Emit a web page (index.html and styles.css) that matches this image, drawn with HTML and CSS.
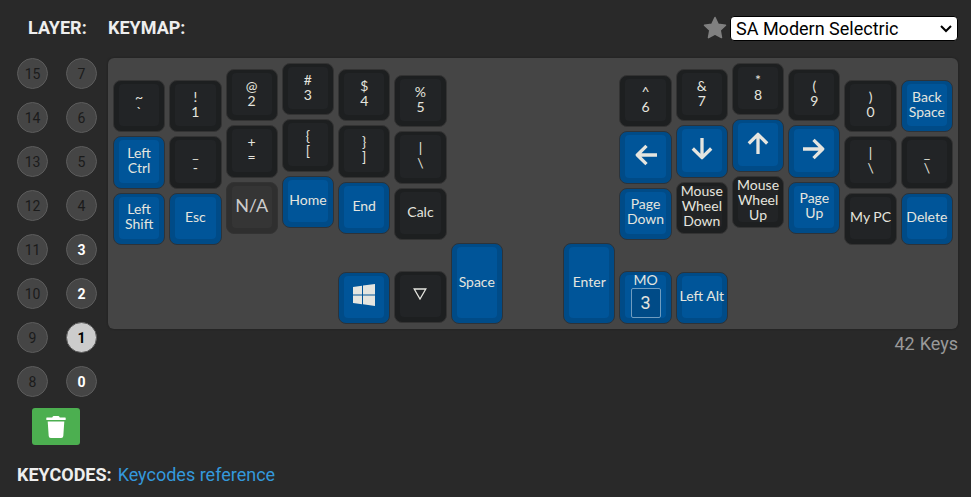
FILE: index.html
```html
<!DOCTYPE html>
<html lang="en">
<head>
<meta charset="utf-8">
<title>Keymap</title>
<link rel="stylesheet" href="styles.css">
</head>
<body>
<main class="page">
  <section class="layers">
    <h2 class="title layer-title">LAYER:</h2>
    <div class="layer-grid">
      <button class="layer">15</button><button class="layer">7</button>
      <button class="layer">14</button><button class="layer">6</button>
      <button class="layer">13</button><button class="layer">5</button>
      <button class="layer">12</button><button class="layer">4</button>
      <button class="layer">11</button><button class="layer used">3</button>
      <button class="layer">10</button><button class="layer used">2</button>
      <button class="layer">9</button><button class="layer active">1</button>
      <button class="layer">8</button><button class="layer used">0</button>
    </div>
    <button class="clear" aria-label="Clear layer">
      <svg width="20" height="22" viewBox="0 0 20 22"><path fill="#fff" d="M.8 1.4h5.4L6.800.5Q7 0 7.600 0h4.800q.6 0 .8.500l.6.900h5.400q.5 0 .5.500v1.700q0 .5-.5.500H.8q-.5 0-.5-.5V1.900q0-.5.500-.5zM1.700 5.500h16.600l-1 14.500q-.1 2-2.100 2H4.800q-2 0-2.100-2z"/></svg>
    </button>
  </section>

  <section class="keymap">
    <header class="bar">
      <h2 class="title">KEYMAP:</h2>
      <div class="picker">
        <svg width="24" height="24" viewBox="0 0 24 24" aria-hidden="true"><path fill="#808080" stroke="#808080" stroke-width="1.500" stroke-linejoin="round" d="M12 1.500l3.200 6.700 7.300 1-5.300 5.100 1.300 7.300L12 18.100l-6.500 3.500 1.300-7.300L1.500 9.200l7.300-1z"/></svg>
        <div class="select">
          <select class="theme" aria-label="Keycap theme"><option>SA Modern Selectric</option></select>
          <svg class="chevron" width="12" height="8" viewBox="0 0 12 8" aria-hidden="true"><path fill="none" stroke="#000" stroke-width="2" d="M1 1l5 5 5-5"/></svg>
        </div>
      </div>
    </header>

    <div class="board">
      <div class="col s3">
        <div class="cell"><button class="key">~<br>`</button></div>
        <div class="cell"><button class="key blue">Left<br>Ctrl</button></div>
        <div class="cell"><button class="key blue">Left<br>Shift</button></div>
      </div>
      <div class="col s3">
        <div class="cell"><button class="key">!<br>1</button></div>
        <div class="cell"><button class="key">_<br>-</button></div>
        <div class="cell"><button class="key blue">Esc</button></div>
      </div>
      <div class="col s1">
        <div class="cell"><button class="key">@<br>2</button></div>
        <div class="cell"><button class="key">+<br>=</button></div>
        <div class="cell"><button class="key none">N/A</button></div>
      </div>
      <div class="col">
        <div class="cell"><button class="key">#<br>3</button></div>
        <div class="cell"><button class="key">{<br>[</button></div>
        <div class="cell"><button class="key blue">Home</button></div>
      </div>
      <div class="col s1">
        <div class="cell"><button class="key">$<br>4</button></div>
        <div class="cell"><button class="key">}<br>]</button></div>
        <div class="cell"><button class="key blue">End</button></div>
        <div class="cell thumb"><button class="key blue" aria-label="Windows"><svg width="22" height="22" viewBox="0 0 22 22"><path fill="#e5e5df" d="M0 3.100l9-1.300v8.700H0zM10 1.600L22 0v10.500H10zM0 11.500h9v8.700l-9-1.300zM10 11.500h12V22l-12-1.700z"/></svg></button></div>
      </div>
      <div class="col s2">
        <div class="cell"><button class="key">%<br>5</button></div>
        <div class="cell"><button class="key">|<br>\</button></div>
        <div class="cell"><button class="key">Calc</button></div>
        <div class="cell thumb"><button class="key" aria-label="Transparent"><svg width="14" height="12" viewBox="0 0 14 12"><path fill="none" stroke="#e5e5df" stroke-width="1.300" d="M1.200 1h11.600L7 11z"/></svg></button></div>
      </div>
      <div class="col">
        <div class="cell tall thumb"><button class="key blue">Space</button></div>
      </div>
      <div class="col"></div>
      <div class="col">
        <div class="cell tall thumb"><button class="key blue">Enter</button></div>
      </div>
      <div class="col s2">
        <div class="cell"><button class="key">^<br>6</button></div>
        <div class="cell"><button class="key blue" aria-label="Left"><svg class="arrow" viewBox="0 0 22 22"><path d="M22 11H2.500M11.500 1.800L2.300 11l9.200 9.200"/></svg></button></div>
        <div class="cell"><button class="key blue">Page<br>Down</button></div>
        <div class="cell thumb"><div class="key blue layer-key"><label for="mo">MO</label><input id="mo" class="target" value="3"></div></div>
      </div>
      <div class="col s1">
        <div class="cell"><button class="key">&amp;<br>7</button></div>
        <div class="cell"><button class="key blue" aria-label="Down"><svg class="arrow" viewBox="0 0 22 22"><path d="M11 0v19.500M1.800 10.500l9.200 9.200 9.200-9.200"/></svg></button></div>
        <div class="cell"><button class="key">Mouse<br>Wheel<br>Down</button></div>
        <div class="cell thumb"><button class="key blue">Left Alt</button></div>
      </div>
      <div class="col">
        <div class="cell"><button class="key">*<br>8</button></div>
        <div class="cell"><button class="key blue" aria-label="Up"><svg class="arrow" viewBox="0 0 22 22"><path d="M11 22V2.500M1.800 11.500L11 2.300l9.200 9.200"/></svg></button></div>
        <div class="cell"><button class="key">Mouse<br>Wheel<br>Up</button></div>
      </div>
      <div class="col s1">
        <div class="cell"><button class="key">(<br>9</button></div>
        <div class="cell"><button class="key blue" aria-label="Right"><svg class="arrow" viewBox="0 0 22 22"><path d="M0 11h19.500M10.500 1.800l9.200 9.200-9.200 9.200"/></svg></button></div>
        <div class="cell"><button class="key blue">Page<br>Up</button></div>
      </div>
      <div class="col s3">
        <div class="cell"><button class="key">)<br>0</button></div>
        <div class="cell"><button class="key">|<br>\</button></div>
        <div class="cell"><button class="key">My PC</button></div>
      </div>
      <div class="col s3">
        <div class="cell"><button class="key blue">Back<br>Space</button></div>
        <div class="cell"><button class="key">_<br>\</button></div>
        <div class="cell"><button class="key blue">Delete</button></div>
      </div>
    </div>
    <p class="count"><span>42</span><span>Keys</span></p>
  </section>
</main>
<footer class="codes">
  <h2 class="title">KEYCODES:</h2>
  <a href="#keycodes">Keycodes reference</a>
</footer>
</body>
</html>
```
FILE: styles.css
```css
* { box-sizing: border-box; }
body {
  margin: 0;
  padding: 13px 13px 0 17px;
  background: #292929;
  color: #eee;
  font: 18px/24px Roboto, sans-serif;
}
button, input, select { font: inherit; color: inherit; }
.title { margin: 0; font-size: 18px; line-height: 30px; font-weight: 700; }
.page { display: flex; gap: 11px; }

.layers { width: 80px; display: flex; flex-direction: column; }
.layer-title { padding-left: 11px; margin-bottom: 15px; }
.layer-grid {
  display: grid;
  grid-template-columns: 31px 31px;
  justify-content: space-between;
  row-gap: 13px;
}
.layer {
  height: 31px;
  padding: 0;
  border: 1px solid #5c5c5c;
  border-radius: 50%;
  background: #454545;
  color: #1b1b1b;
  font-size: 14px;
  line-height: 20px;
}
.layer.used { color: #fff; font-weight: 700; }
.layer.active { background: #ccc; color: #000; font-weight: 700; }
.clear {
  align-self: center;
  width: 48px;
  height: 37px;
  margin: 11px 2px 0 0;
  padding: 0;
  border: 0;
  border-radius: 3px;
  background: #4caf50;
  display: flex;
  align-items: center;
  justify-content: center;
}

.keymap { flex: 1; min-width: 0; }
.bar { display: flex; justify-content: space-between; align-items: center; margin-bottom: 15px; }
.picker { display: flex; align-items: center; gap: 3px; }
.select { position: relative; display: flex; }
.theme {
  appearance: none;
  width: 228px;
  height: 25px;
  padding: 0 24px 0 5px;
  border: 1px solid #000;
  border-radius: 4px;
  background: #fff;
  color: #000;
}
.chevron { position: absolute; right: 6px; top: 9px; pointer-events: none; }

.board {
  display: grid;
  grid-template-columns: repeat(15, 1fr);
  padding: 3px;
  border-radius: 6px;
  background: #454545;
  box-shadow: 0 0 2px #1c1c1c;
}
.col { display: flex; flex-direction: column; min-width: 0; }
.s1 { padding-top: 6px; }
.s2 { padding-top: 12px; }
.s3 { padding-top: 17px; }
.cell { aspect-ratio: 1; padding: 2px; flex: none; }
.cell.tall { aspect-ratio: 2 / 3; }
.thumb { margin-top: auto; }
.s2 .thumb { margin-top: 27px; }
.key {
  position: relative;
  z-index: 0;
  display: grid;
  place-content: center;
  width: 100%;
  height: 100%;
  padding: 0 0 5px;
  border: 1px solid #333;
  border-radius: 8px;
  background: #1d1f20;
  color: #e5e5df;
  font: 14px/15px Lato, sans-serif;
  text-align: center;
  white-space: nowrap;
}
.key::before {
  content: "";
  position: absolute;
  z-index: -1;
  inset: 3px 5px 5px;
  border-radius: 4px;
  background: #222426;
}
.key.blue { background: #004b87; border-color: #2d3339; }
.key.blue::before { background: #005599; }
.key.none { background: #2f2f2f; color: #ccc; font-size: 18px; }
.key.none::before { background: #353535; }
.arrow { width: 22px; height: 22px; fill: none; stroke: #e5e5df; stroke-width: 3.3; stroke-linejoin: round; }
.layer-key { justify-items: center; gap: 1px; }
.target {
  width: 30px;
  height: 30px;
  padding: 0;
  border: 1px solid #6f9cc0;
  border-radius: 2px;
  background: #004b87;
  text-align: center;
  font: 18px/24px Roboto, sans-serif;
}
.count { margin: 3px 0 0; display: flex; justify-content: flex-end; gap: 5px; color: #999; }
.codes { display: flex; align-items: center; gap: 6px; margin-top: 15px; }
.codes a { color: #3498db; text-decoration: none; }
```
